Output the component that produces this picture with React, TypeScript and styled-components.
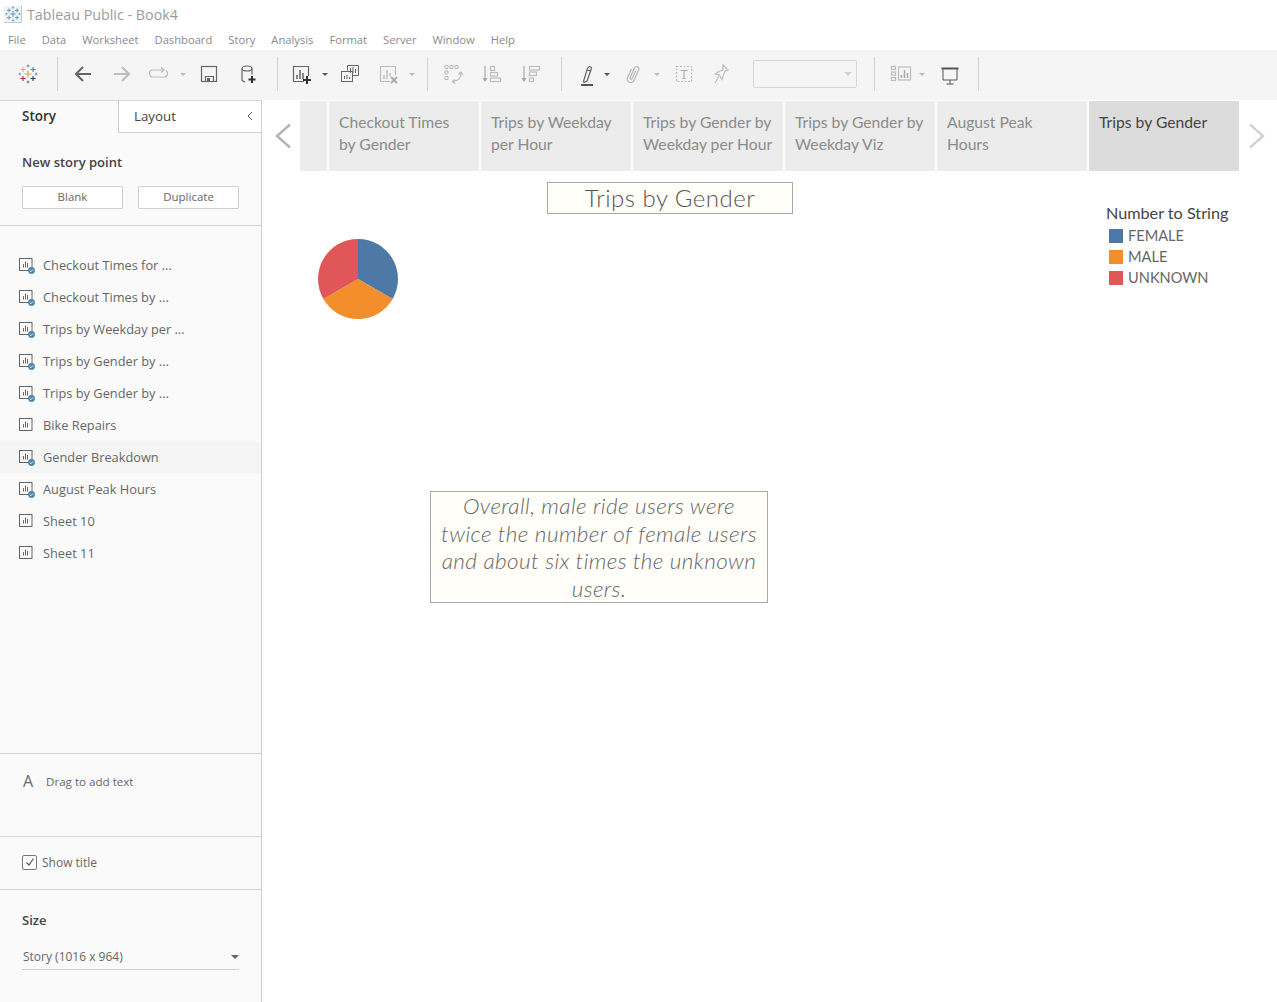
import React from 'react'
import styled, { createGlobalStyle } from 'styled-components'

const FONT = `"Open Sans", "Liberation Sans", sans-serif`
const CANVAS_FONT = `Lato, "Open Sans", sans-serif`

const Global = createGlobalStyle`
html, body {
  margin: 0;
  padding: 0;
  background: #fff;
}
body {
  font-family: ${FONT};
  overflow: hidden;
}
* {
  box-sizing: border-box;
}
`

const LogoMark = ({ size = 20, mono = false }: { size?: number; mono?: boolean }) => {
  const c = (color: string) => (mono ? '#5f8fb5' : color)
  const plus = (x: number, y: number, r: number, color: string, w: number) => (
    <path d={`M${x - r} ${y}H${x + r}M${x} ${y - r}V${y + r}`} stroke={c(color)} strokeWidth={w} fill="none" />
  )
  return (
    <svg width={size} height={size} viewBox="0 0 20 20">
      {plus(10, 10, 3.5, '#e5a04f', 1.2)}
      {plus(5, 5.5, 2.5, '#eeaa55', 1.1)}
      {plus(15, 5.5, 2.5, '#5b879b', 1.1)}
      {plus(5, 14.5, 2.5, '#b9283f', 1.1)}
      {plus(15, 14.5, 2.5, '#1f447a', 1.1)}
      {plus(10, 2, 1.4, '#59879b', 0.9)}
      {plus(10, 18, 1.4, '#5b6591', 0.9)}
      {plus(1.8, 10, 1.4, '#7099a6', 0.9)}
      {plus(18.2, 10, 1.4, '#5b879b', 0.9)}
    </svg>
  )
}

const Svg = ({ children, color }: { children: React.ReactNode; color: string }) => (
  <svg width="24" height="24" viewBox="0 0 24 24" fill="none" stroke={color} strokeWidth="1.2">
    {children}
  </svg>
)

const DARK = '#666'
const FAINT = '#bdbdbd'

const icons: Record<string, React.ReactNode> = {
  back: (
    <Svg color="#666">
      <path d="M20 12H5M12 5l-7 7 7 7" strokeWidth="2" />
    </Svg>
  ),
  forward: (
    <Svg color={FAINT}>
      <path d="M4 12h15M12 5l7 7-7 7" strokeWidth="2" />
    </Svg>
  ),
  redo: (
    <Svg color={FAINT}>
      <path d="M17 8H7a3.5 3.5 0 0 0 0 7h11a3.5 3.5 0 0 0 2-6.4M15 5.5 18 8l-3 2.5" />
    </Svg>
  ),
  save: (
    <Svg color={DARK}>
      <rect x="4.5" y="4.5" width="15" height="15" />
      <path d="M8.5 19.5v-5h8v5" />
      <rect x="10" y="16" width="3" height="3" fill={DARK} stroke="none" />
    </Svg>
  ),
  addData: (
    <Svg color={DARK}>
      <ellipse cx="11" cy="6.5" rx="5" ry="2.5" />
      <path d="M6 6.5v11c0 1.2 1.3 2 3 2.3M16 6.5v6" />
      <path d="M16 14v7M12.5 17.5h7" stroke="#333" strokeWidth="2" />
    </Svg>
  ),
  addSheet: (
    <Svg color={DARK}>
      <path d="M15 19.5H4.5v-15h15V14" />
      <path d="M8 17v-4M11 17V8M14 17v-6" strokeWidth="1.5" />
      <path d="M18 14v8M14 18h8" stroke="#333" strokeWidth="2" />
    </Svg>
  ),
  duplicate: (
    <Svg color={DARK}>
      <path d="M9.5 8.5V3.5h11v10h-6" strokeWidth="1" />
      <rect x="3.5" y="9.5" width="11" height="10" fill="#f5f5f5" strokeWidth="1" />
      <path d="M12.5 11V6M15 11V5M17.5 11V7M6.5 17v-3M9 17v-4M11.5 17v-2" strokeWidth="1" />
    </Svg>
  ),
  clearSheet: (
    <Svg color={FAINT}>
      <path d="M14 19.5H4.5v-15h15V13" />
      <path d="M8 17v-4M11 17V8M14 14v-3" strokeWidth="1.5" />
      <path d="M15 15l6 6M21 15l-6 6" stroke="#aaa" strokeWidth="2" />
    </Svg>
  ),
  swap: (
    <Svg color={FAINT}>
      <path d="M4 3.5h3v3H4zM9 3.5h3v3H9zM14 3.5h3v3h-3zM4 9h3v3H4zM4 14.5h3v3H4z" strokeWidth="1" />
      <path d="M20 11c.6 4.5-3 8.500-8 8M17.500 12.500 20 10l2 2.800M14 17.500 11.500 19.500 14 21.500" />
    </Svg>
  ),
  sortAsc: (
    <Svg color={FAINT}>
      <path d="M5 4v15" stroke="#aaa" />
      <path d="M2.500 16h5L5 20z" fill="#aaa" stroke="none" />
      <rect x="10.500" y="4.500" width="4" height="4" />
      <rect x="10.500" y="10.500" width="7" height="3.500" />
      <rect x="10.500" y="16" width="10" height="3.500" />
    </Svg>
  ),
  sortDesc: (
    <Svg color={FAINT}>
      <path d="M5 4v15" stroke="#aaa" />
      <path d="M2.500 16h5L5 20z" fill="#aaa" stroke="none" />
      <rect x="10.500" y="4.500" width="10" height="3.500" />
      <rect x="10.500" y="10" width="7" height="3.500" />
      <rect x="10.500" y="16" width="4" height="3.500" />
    </Svg>
  ),
  highlight: (
    <Svg color={DARK}>
      <path d="M8.500 19.500 12.500 6l2-1.500 2 1-.5 2.500-4 11-3 1.500zM12.500 8l3 1" />
      <path d="M6 23h12" stroke="#555" strokeWidth="2" />
    </Svg>
  ),
  clip: (
    <Svg color={FAINT}>
      <g transform="rotate(24 12 12)">
        <path d="M8.500 8v9.500a3.500 3.500 0 0 0 7 0V6a2.300 2.300 0 0 0-4.600 0v10.500a1.100 1.100 0 0 0 2.200 0V8" strokeWidth="1.300" />
      </g>
    </Svg>
  ),
  textBox: (
    <Svg color={FAINT}>
      <rect x="4.500" y="4.500" width="15" height="15" strokeDasharray="2 1.500" />
      <path d="M8.500 8.500h7M12 8.500v8M10.500 16.500h3" stroke="#b0b0b0" />
    </Svg>
  ),
  pin: (
    <Svg color={FAINT}>
      <path d="M14 3l5 5-3 1-2 5.500-1 3-2.500-4.500-4-1 3-2.500L14 8zM10 14l-4 7" />
    </Svg>
  ),
  cards: (
    <Svg color={FAINT}>
      <rect x="2.500" y="4.500" width="4" height="3" />
      <rect x="2.500" y="10" width="4" height="3" />
      <rect x="2.500" y="15.500" width="4" height="3" />
      <rect x="9.500" y="5" width="12" height="13" />
      <path d="M12.500 16v-3M15.500 16V8M18.500 16v-5" strokeWidth="1.500" stroke="#aaa" />
    </Svg>
  ),
  present: (
    <Svg color="#555">
      <path d="M3.500 6.500h17" strokeWidth="2" />
      <path d="M5 7v11h14V7M12 18v4M8.500 22h7" strokeWidth="1" />
    </Svg>
  ),
}

type ToolItem =
  | { kind: 'logo'; ml: number }
  | { kind: 'sep'; ml: number }
  | { kind: 'caret'; ml: number; dim?: boolean }
  | { kind: 'field'; ml: number }
  | { kind: 'icon'; ml: number; name: string }

const tools: ToolItem[] = [
  { kind: 'logo', ml: 16 },
  { kind: 'sep', ml: 17 },
  { kind: 'icon', ml: 13, name: 'back' },
  { kind: 'icon', ml: 15, name: 'forward' },
  { kind: 'icon', ml: 12, name: 'redo' },
  { kind: 'caret', ml: 9, dim: true },
  { kind: 'icon', ml: 10, name: 'save' },
  { kind: 'icon', ml: 15, name: 'addData' },
  { kind: 'sep', ml: 17 },
  { kind: 'icon', ml: 11, name: 'addSheet' },
  { kind: 'caret', ml: 8 },
  { kind: 'icon', ml: 9, name: 'duplicate' },
  { kind: 'icon', ml: 14, name: 'clearSheet' },
  { kind: 'caret', ml: 8, dim: true },
  { kind: 'sep', ml: 11 },
  { kind: 'icon', ml: 13, name: 'swap' },
  { kind: 'icon', ml: 15, name: 'sortAsc' },
  { kind: 'icon', ml: 15, name: 'sortDesc' },
  { kind: 'sep', ml: 18 },
  { kind: 'icon', ml: 13, name: 'highlight' },
  { kind: 'caret', ml: 4 },
  { kind: 'icon', ml: 10, name: 'clip' },
  { kind: 'caret', ml: 8, dim: true },
  { kind: 'icon', ml: 11, name: 'textBox' },
  { kind: 'icon', ml: 13, name: 'pin' },
  { kind: 'field', ml: 20 },
  { kind: 'sep', ml: 17 },
  { kind: 'icon', ml: 14, name: 'cards' },
  { kind: 'caret', ml: 5, dim: true },
  { kind: 'icon', ml: 12, name: 'present' },
  { kind: 'sep', ml: 16 },
]

const menus = ['File', 'Data', 'Worksheet', 'Dashboard', 'Story', 'Analysis', 'Format', 'Server', 'Window', 'Help']

const sheets = [
  { name: 'Checkout Times for ...', used: true },
  { name: 'Checkout Times by ...', used: true },
  { name: 'Trips by Weekday per ...', used: true },
  { name: 'Trips by Gender by ...', used: true },
  { name: 'Trips by Gender by ...', used: true },
  { name: 'Bike Repairs', used: false },
  { name: 'Gender Breakdown', used: true, hover: true },
  { name: 'August Peak Hours', used: true },
  { name: 'Sheet 10', used: false },
  { name: 'Sheet 11', used: false },
]

const storyPoints = [
  { lines: [], width: 27 },
  { lines: ['Checkout Times', 'by Gender'], width: 150 },
  { lines: ['Trips by Weekday', 'per Hour'], width: 150 },
  { lines: ['Trips by Gender by', 'Weekday per Hour'], width: 150 },
  { lines: ['Trips by Gender by', 'Weekday Viz'], width: 150 },
  { lines: ['August Peak', 'Hours'], width: 150 },
  { lines: ['Trips by Gender'], width: 150, active: true },
]

const legend = [
  { label: 'FEMALE', color: '#4e79a7' },
  { label: 'MALE', color: '#f28e2b' },
  { label: 'UNKNOWN', color: '#e15759' },
]

const SheetIcon = ({ used }: { used: boolean }) => (
  <svg width="18" height="18" viewBox="0 0 18 18" fill="none">
    <rect x="1.500" y="2.500" width="12.500" height="12" stroke="#666" />
    <path d="M5.500 11.500V8M7.500 11.500V5.500M9.500 11.500V7" stroke="#666" />
    {used && (
      <>
        <circle cx="13.500" cy="14.500" r="3.400" fill="#4b86a6" />
        <path d="M11.800 14.500l1.200 1.200 2-2.200" stroke="#fff" strokeWidth="0.9" />
      </>
    )}
  </svg>
)

const App = () => {
  return (
    <Page>
      <Global />
      <TitleBar>
        <TitleLogo>
          <LogoMark size={16} mono />
        </TitleLogo>
        <AppTitle>Tableau Public - Book4</AppTitle>
      </TitleBar>
      <MenuBar>
        {menus.map((m) => (
          <MenuItem key={m}>{m}</MenuItem>
        ))}
      </MenuBar>
      <Toolbar>
        {tools.map((t, i) => {
          if (t.kind === 'sep') return <ToolSep key={i} $ml={t.ml} />
          if (t.kind === 'caret') return <Caret key={i} $ml={t.ml} $dim={t.dim} />
          if (t.kind === 'field') return <ToolField key={i} $ml={t.ml}><FieldCaret /></ToolField>
          return (
            <ToolIcon key={i} $ml={t.ml}>
              {t.kind === 'logo' ? <LogoMark /> : icons[t.name]}
            </ToolIcon>
          )
        })}
      </Toolbar>
      <Body>
        <Sidebar>
          <SideTabs>
            <StoryTab>Story</StoryTab>
            <LayoutTab>
              Layout
              <svg width="8" height="10" viewBox="0 0 8 10" fill="none">
                <path d="M6 1 2 5l4 4" stroke="#555" />
              </svg>
            </LayoutTab>
          </SideTabs>
          <NewPoint>
            <SectionTitle>New story point</SectionTitle>
            <ButtonRow>
              <SideButton>Blank</SideButton>
              <SideButton>Duplicate</SideButton>
            </ButtonRow>
          </NewPoint>
          <SheetList>
            {sheets.map((s, i) => (
              <SheetRow key={i} $hover={s.hover}>
                <SheetIcon used={s.used} />
                {s.name}
              </SheetRow>
            ))}
          </SheetList>
          <DragSection>
            <BigA>A</BigA>
            Drag to add text
          </DragSection>
          <TitleSection>
            <CheckBox>
              <svg width="12" height="12" viewBox="0 0 12 12" fill="none">
                <path d="M2.500 6.500 5 9l4.500-6.500" stroke="#555" strokeWidth="1.200" />
              </svg>
            </CheckBox>
            Show title
          </TitleSection>
          <SizeSection>
            <SectionTitle>Size</SectionTitle>
            <SizeSelect>
              Story (1016 x 964)
              <SelectCaret />
            </SizeSelect>
          </SizeSection>
        </Sidebar>
        <Main>
          <StoryNav>
            <NavArrow $pad={12}>
              <svg width="18" height="26" viewBox="0 0 18 26" fill="none">
                <path d="M16 1.500 3 13l13 11.500" stroke="#b4b4b4" strokeWidth="2.400" />
              </svg>
            </NavArrow>
            {storyPoints.map((p, i) => (
              <StoryPoint key={i} $width={p.width} $active={p.active}>
                {p.lines.map((line) => (
                  <div key={line}>{line}</div>
                ))}
              </StoryPoint>
            ))}
            <NavArrow $pad={7}>
              <svg width="18" height="26" viewBox="0 0 18 26" fill="none">
                <path d="M2 1.500 15 13 2 24.500" stroke="#d2d2d2" strokeWidth="2.400" />
              </svg>
            </NavArrow>
          </StoryNav>
          <Canvas>
            <CanvasLeft>
              <VizTitle>Trips by Gender</VizTitle>
              <Pie width="82" height="82" viewBox="0 0 82 82">
                <path d="M41 41V1A40 40 0 0 1 75.640 61Z" fill="#4e79a7" />
                <path d="M41 41 75.640 61A40 40 0 0 1 6.360 61Z" fill="#f28e2b" />
                <path d="M41 41 6.360 61A40 40 0 0 1 41 1Z" fill="#e15759" />
              </Pie>
              <Caption>
                Overall, male ride users were twice the number of female users and about six times the unknown users.
              </Caption>
            </CanvasLeft>
            <Legend>
              <LegendTitle>Number to String</LegendTitle>
              {legend.map((l) => (
                <LegendRow key={l.label}>
                  <Swatch $color={l.color} />
                  {l.label}
                </LegendRow>
              ))}
            </Legend>
          </Canvas>
        </Main>
      </Body>
    </Page>
  )
}

export default App

const Page = styled.div`
width: 1277px;
height: 1002px;
display: flex;
flex-direction: column;
overflow: hidden;
background: #fff;
`

const TitleBar = styled.div`
height: 29px;
display: flex;
align-items: center;
padding-left: 4px;
`

const TitleLogo = styled.div`
width: 18px;
height: 17px;
display: flex;
align-items: center;
justify-content: center;
background: #eef3f6;
border-right: 1px solid #c8c8c8;
border-bottom: 1px solid #c8c8c8;
`

const AppTitle = styled.div`
margin-left: 5px;
font-size: 14.3px;
color: #9b9b9b;
`

const MenuBar = styled.div`
height: 21px;
display: flex;
align-items: center;
gap: 16px;
padding: 0 0 1px 8px;
font-size: 11.2px;
color: #8a8a8a;
`

const MenuItem = styled.div``

const Toolbar = styled.div`
height: 50px;
display: flex;
align-items: center;
padding-bottom: 2px;
background: #f5f5f5;
`

const ToolIcon = styled.div<{ $ml: number }>`
width: 24px;
height: 24px;
margin-left: ${(p) => p.$ml}px;
display: flex;
align-items: center;
justify-content: center;
flex: none;
`

const ToolSep = styled.div<{ $ml: number }>`
width: 1px;
height: 34px;
margin-left: ${(p) => p.$ml}px;
background: #d4d4d4;
flex: none;
`

const Caret = styled.div<{ $ml: number; $dim?: boolean }>`
width: 0;
height: 0;
margin-left: ${(p) => p.$ml + 1}px;
margin-right: 1px;
border-left: 3px solid transparent;
border-right: 3px solid transparent;
border-top: 3px solid ${(p) => (p.$dim ? '#bbb' : '#555')};
flex: none;
`

const ToolField = styled.div<{ $ml: number }>`
width: 104px;
height: 28px;
margin-left: ${(p) => p.$ml}px;
display: flex;
align-items: center;
justify-content: flex-end;
padding-right: 4px;
border: 1px solid #d6d6d6;
border-radius: 2px;
flex: none;
`

const FieldCaret = styled.div`
width: 0;
height: 0;
border-left: 4px solid transparent;
border-right: 4px solid transparent;
border-top: 4px solid #d0d0d0;
`

const Body = styled.div`
flex: 1;
display: flex;
min-height: 0;
`

const Sidebar = styled.div`
width: 262px;
flex: none;
display: flex;
flex-direction: column;
background: #fafafa;
border-right: 1px solid #d0d0d0;
color: #555;
font-size: 12.5px;
`

const SideTabs = styled.div`
height: 33px;
display: flex;
border-top: 1px solid #d4d4d4;
`

const StoryTab = styled.div`
width: 118px;
padding: 6px 0 0 22px;
font-size: 13.5px;
font-weight: 600;
color: #333;
`

const LayoutTab = styled.div`
flex: 1;
display: flex;
align-items: center;
justify-content: space-between;
padding: 0 7px 2px 15px;
font-size: 13.3px;
color: #444;
background: #fff;
border-left: 1px solid #d0d0d0;
border-bottom: 1px solid #d0d0d0;
`

const NewPoint = styled.div`
height: 93px;
padding: 20px 22px 0;
border-bottom: 1px solid #d4d4d4;
`

const SectionTitle = styled.div`
font-size: 13px;
font-weight: 600;
line-height: 18px;
color: #444;
`

const ButtonRow = styled.div`
display: flex;
gap: 15px;
margin-top: 15px;
`

const SideButton = styled.div`
width: 101px;
height: 23px;
display: flex;
align-items: center;
justify-content: center;
padding-bottom: 2px;
background: #fff;
border: 1px solid #cfcfcf;
border-radius: 1px;
font-size: 11.5px;
color: #666;
`

const SheetList = styled.div`
flex: 1;
padding-top: 23px;
border-bottom: 1px solid #d4d4d4;
`

const SheetRow = styled.div<{ $hover?: boolean }>`
height: 32px;
display: flex;
align-items: center;
gap: 7px;
padding-left: 18px;
font-size: 12.8px;
color: #666;
background: ${(p) => (p.$hover ? '#f5f5f5' : 'transparent')};
`

const DragSection = styled.div`
height: 83px;
display: flex;
align-items: flex-start;
padding: 18px 0 0 23px;
font-size: 11.6px;
line-height: 19px;
color: #666;
border-bottom: 1px solid #d4d4d4;
`

const BigA = styled.span`
width: 23px;
font-size: 16px;
color: #666;
`

const TitleSection = styled.div`
height: 53px;
display: flex;
align-items: center;
gap: 5px;
padding: 0 0 2px 22px;
font-size: 12px;
color: #666;
border-bottom: 1px solid #d4d4d4;
`

const CheckBox = styled.div`
width: 15px;
height: 15px;
display: flex;
align-items: center;
justify-content: center;
background: #fff;
border: 1px solid #777;
border-radius: 2px;
`

const SizeSection = styled.div`
flex: none;
height: 112px;
padding: 21px 22px 0;
`

const SizeSelect = styled.div`
height: 26px;
margin-top: 15px;
display: flex;
align-items: center;
justify-content: space-between;
padding: 0 0 0 1px;
font-size: 12px;
color: #666;
border-bottom: 1px solid #d0d0d0;
`

const SelectCaret = styled.div`
width: 0;
height: 0;
border-left: 4px solid transparent;
border-right: 4px solid transparent;
border-top: 4px solid #666;
`

const Main = styled.div`
flex: 1;
display: flex;
flex-direction: column;
min-width: 0;
font-family: ${CANVAS_FONT};
`

const StoryNav = styled.div`
height: 71px;
flex: none;
display: flex;
gap: 2px;
padding-top: 1px;
align-items: stretch;
`

const NavArrow = styled.div<{ $pad: number }>`
width: 36px;
display: flex;
align-items: center;
padding-left: ${(p) => p.$pad}px;
`

const StoryPoint = styled.div<{ $width: number; $active?: boolean }>`
width: ${(p) => p.$width}px;
padding: 10px 0 0 10px;
font-size: 15.7px;
line-height: 22px;
white-space: nowrap;
background: ${(p) => (p.$active ? '#dcdcdc' : '#ececec')};
color: ${(p) => (p.$active ? '#444' : '#8b8b8b')};
`

const Canvas = styled.div`
flex: 1;
display: flex;
`

const CanvasLeft = styled.div`
width: 844px;
flex: none;
`

const VizTitle = styled.div`
width: 246px;
height: 32px;
margin: 11px 0 0 285px;
display: flex;
align-items: center;
justify-content: center;
padding-bottom: 2px;
font-size: 24px;
font-weight: 300;
letter-spacing: 0.5px;
color: #555;
background: #fffef9;
border: 1px solid #a8a8a0;
`

const Pie = styled.svg`
display: block;
margin: 24px 0 0 55px;
`

const Caption = styled.div`
width: 338px;
height: 112px;
margin: 171px 0 0 168px;
padding: 0 8px;
text-align: center;
font-size: 22.5px;
font-weight: 300;
font-style: italic;
letter-spacing: 0.4px;
line-height: 27.500px;
color: #666;
background: #fffef9;
border: 1px solid #a8a8a0;
`

const Legend = styled.div`
padding-top: 32px;
color: #666;
`

const LegendTitle = styled.div`
font-size: 16.2px;
line-height: 20px;
margin-bottom: 2px;
color: #444;
`

const LegendRow = styled.div`
height: 21px;
display: flex;
align-items: center;
gap: 5px;
padding-left: 3px;
font-size: 14.6px;
`

const Swatch = styled.div<{ $color: string }>`
width: 14px;
height: 14px;
background: ${(p) => p.$color};
`
